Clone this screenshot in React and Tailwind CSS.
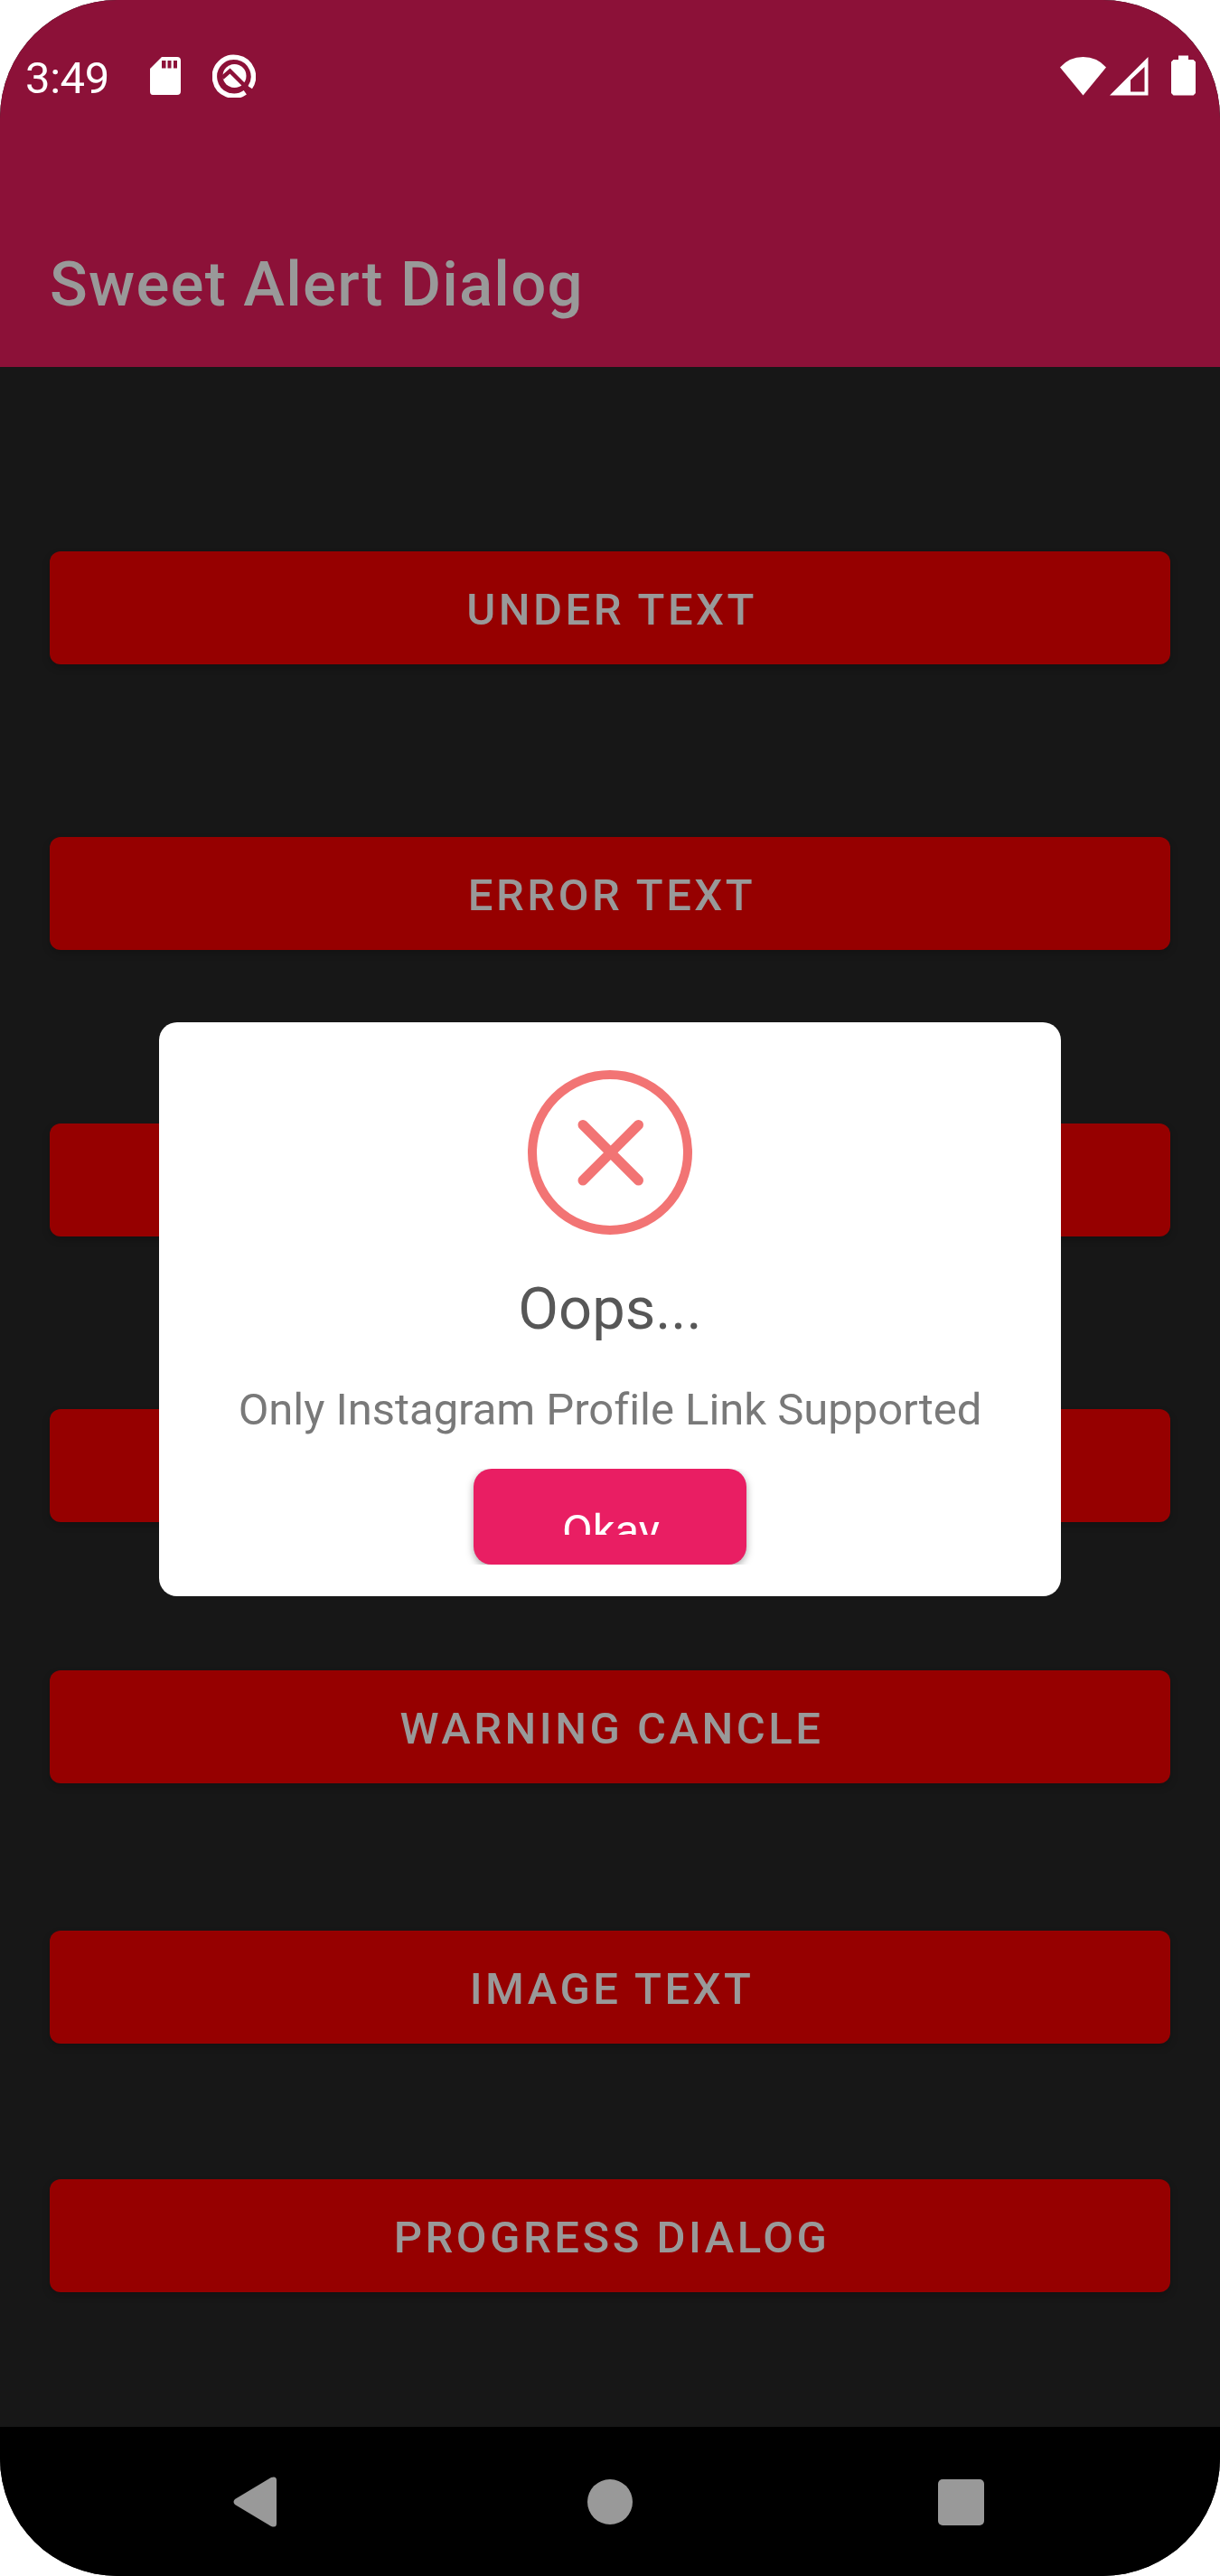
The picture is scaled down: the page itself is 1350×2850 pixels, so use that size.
const buttons = [
  { label: "UNDER TEXT", gap: "mt-[204px]" },
  { label: "ERROR TEXT", gap: "mt-[191px]" },
  { label: "SUCCESS TEXT", gap: "mt-[192px]" },
  { label: "WARNING TEXT", gap: "mt-[191px]" },
  { label: "WARNING CANCLE", gap: "mt-[164px]" },
  { label: "IMAGE TEXT", gap: "mt-[163px]" },
  { label: "PROGRESS DIALOG", gap: "mt-[150px]" },
];

function StatusBar() {
  return (
    <div className="flex h-[168px] items-start justify-between pl-[28px] pr-[27px] pt-[60px] text-white">
      <div className="flex items-start">
        <span className="w-[137px] whitespace-nowrap pt-[1px] text-[49px] leading-[52px] tracking-[-0.4px]">3:49</span>
        <svg className="mt-[3px] h-[43px] w-[36px]" viewBox="0 0 36 43">
          <path fill="currentColor" fillRule="evenodd" d="M14 0H31Q35 0 35 4V38Q35 42 31 42H4Q1 42 1 38V13ZM14 4V12.500H18.500V4ZM20.500 4V12.500H24.500V4ZM27 4V12.500H31V4Z" />
        </svg>
        <svg className="ml-[34px] h-[48px] w-[48px]" viewBox="0 0 48 48">
          <path d="M36.300 42.300A21.500 21.500 0 1 1 41.700 36.800" fill="none" stroke="currentColor" strokeWidth="5.500" />
          <circle cx="24.500" cy="24" r="13" fill="currentColor" />
          <path d="M11 26L19.500 18.500L41 40" fill="none" stroke="#8c1138" strokeWidth="4.500" />
        </svg>
      </div>
      <div className="flex items-start">
        <svg className="mt-[3px] h-[43px] w-[51px]" viewBox="0 0 51 43" fill="currentColor">
          <path d="M0 11.500Q10 0 25.500 0T51 11.500L25.500 42.500Z" />
        </svg>
        <svg className="ml-[4px] mt-[3px] h-[43px] w-[43px]" viewBox="0 0 43 43" fill="currentColor">
          <path fillRule="evenodd" d="M0 42.500L42.500 0V42.500ZM23 38.500H38.500V11L23 25.500Z" />
        </svg>
        <svg className="ml-[25px] mt-[1px] h-[45px] w-[27px]" viewBox="0 0 27 45" fill="currentColor">
          <path d="M8 .5H19V5H24.500L27 7.500V42L24.500 44.500H2.500L0 42V7.500L2.500 5H8Z" />
        </svg>
      </div>
    </div>
  );
}

function AlertDialog() {
  return (
    <div
      role="dialog"
      className="absolute left-[176px] top-[1131px] flex h-[635px] w-[998px] flex-col items-center rounded-[20px] bg-white pt-[53px]"
    >
      <svg className="h-[182px] w-[182px] shrink-0" viewBox="0 0 182 182" fill="none" stroke="#f27474">
        <circle cx="91" cy="91" r="86" strokeWidth="10" />
        <path d="M61 60.500L122.500 122M122.500 60.500L61 122" strokeWidth="11" strokeLinecap="round" />
      </svg>
      <h2 className="mt-[44px] whitespace-nowrap text-[65px] leading-[76px] text-[#575757]">Oops...</h2>
      <p className="mt-[45px] whitespace-nowrap text-[49px] leading-[58px] tracking-[-0.04px] text-[#797979]">
        Only Instagram Profile Link Supported
      </p>
      <div className="mt-[36px] h-[106px] w-[322px] overflow-hidden px-[10px]">
        <button className="flex h-[106px] w-[302px] items-start justify-center rounded-[20px] bg-[#e91e63] pl-[2px] pt-[33px] shadow-[0_3px_8px_rgba(0,0,0,0.35)]">
          <span className="block h-[40px] overflow-hidden pt-[7px] text-[49px] leading-[58px] text-white">Okay</span>
        </button>
      </div>
    </div>
  );
}

function NavigationBar() {
  return (
    <nav className="flex h-[165px] items-center bg-black pl-[258px] pt-[2px] text-[#999999]">
      <svg className="mb-[2px] h-[56px] w-[48px]" viewBox="0 0 48 56" fill="currentColor">
        <path d="M2 25L42 1Q48-1 48 4V52Q48 57 42 55L2 31Q-1 28 2 25Z" />
      </svg>
      <div className="mb-[1px] ml-[344px] h-[50px] w-[50px] rounded-full bg-current" />
      <div className="ml-[338px] h-[51px] w-[51px] rounded-[5px] bg-current" />
    </nav>
  );
}

export default function App() {
  return (
    <div className="h-[2850px] w-[1350px] bg-white">
      <div className="relative flex h-[2850px] w-[1350px] flex-col overflow-hidden rounded-[130px] bg-[#171717] font-['Roboto',sans-serif]">
        <header className="h-[406px] shrink-0 bg-[#8c1138]">
          <StatusBar />
          <h1 className="ml-[55px] mt-[106px] whitespace-nowrap pt-[1px] text-[69px] font-medium leading-[80px] tracking-[1.2px] text-[#999999]">
            Sweet Alert Dialog
          </h1>
        </header>
        <main className="flex flex-1 flex-col px-[55px]">
          {buttons.map((b) => (
            <button
              key={b.label}
              className={`${b.gap} h-[125px] w-full shrink-0 rounded-[12px] bg-[#960000] pl-[4px] pt-[4px] text-center text-[49px] font-medium leading-[58px] tracking-[3.5px] text-[#999999] shadow-[0_4px_8px_rgba(0,0,0,0.2)]`}
            >
              {b.label}
            </button>
          ))}
        </main>
        <NavigationBar />
        <AlertDialog />
      </div>
    </div>
  );
}
